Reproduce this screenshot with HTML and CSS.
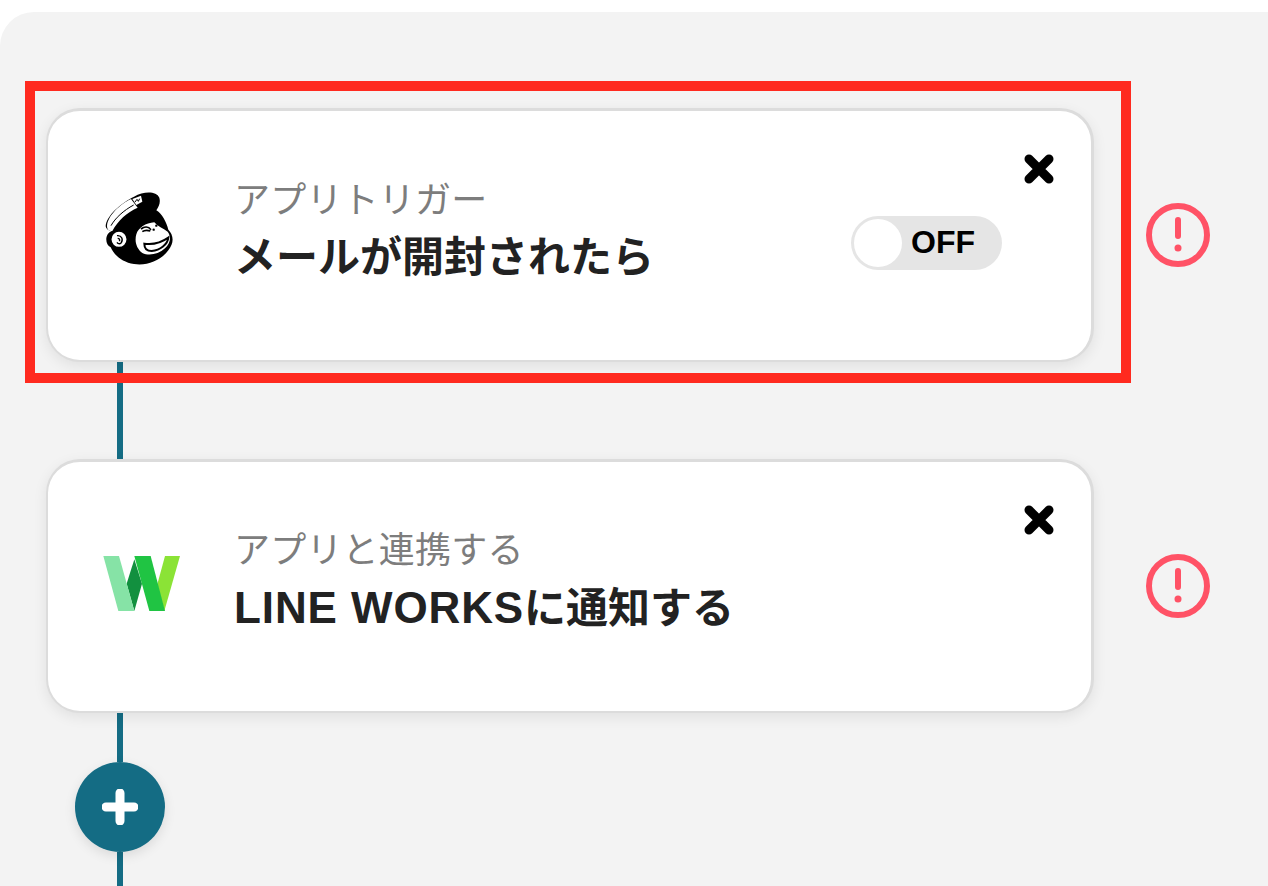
FILE: index.html
```html
<!DOCTYPE html>
<html lang="ja">
<head>
    <meta charset="UTF-8">
    <meta name="viewport" content="width=device-width, initial-scale=1.0">
    <title>フローボット</title>
    <link rel="stylesheet" href="styles.css">
</head>
<body>
    <div class="panel">
        <div class="highlight"></div>

        <div class="row">
            <div class="card">
                <svg class="logo" viewBox="0 15 360 330">
                    <path d="M80 172C82 140 125 103 165 83C195 66 232 66 241 86C245 100 240 112 232 124C250 135 262 160 268 182C284 198 286 222 268 244C248 272 205 292 165 285C130 280 105 258 95 235C78 228 76 195 98 186C88 185 81 180 80 172Z" fill="#000"/>
                    <path d="M84 170C87 140 122 106 156 90L176 116C146 128 116 155 100 186C88 186 84 180 84 170Z" fill="#fff"/>
                    <path d="M96 170C108 148 134 124 164 108" fill="none" stroke="#000" stroke-width="3"/>
                    <path d="M160 90L186 80L190 98L172 108Z" fill="#fff"/>
                    <path d="M168 99L174 91L178 97L182 89" fill="none" stroke="#000" stroke-width="3"/>
                    <circle cx="120" cy="211" r="25" fill="#fff" stroke="#000" stroke-width="5"/>
                    <path d="M114 200C128 198 134 212 126 222C122 226 116 224 114 220M116 208C122 208 124 214 120 216" fill="none" stroke="#000" stroke-width="4"/>
                    <path d="M172 196C178 176 200 162 226 160C236 172 252 178 266 188C278 204 274 222 258 238C238 256 210 262 190 252C172 238 166 216 172 196Z" fill="#fff"/>
                    <path d="M186 180C196 172 208 172 216 182M190 188C198 182 208 184 214 186" fill="none" stroke="#000" stroke-width="5"/>
                    <circle cx="232" cy="170" r="3.5" fill="#000"/>
                    <circle cx="224" cy="182" r="3.5" fill="#000"/>
                    <path d="M196 224C222 228 248 220 268 206C266 226 244 244 218 246C204 246 196 238 196 224Z" fill="#fff" stroke="#000" stroke-width="6"/>
                </svg>
                <div class="text">
                    <div class="label">アプリトリガー</div>
                    <div class="title">メールが開封されたら</div>
                </div>
                <div class="toggle">
                    <span class="knob"></span>
                    <span class="toggle-text">OFF</span>
                </div>
                <svg class="close" viewBox="0 0 30 30"><path d="M5 5L25 25M25 5L5 25" stroke="#000" stroke-width="9" stroke-linecap="round"/></svg>
            </div>
            <svg class="alert" viewBox="0 0 64 64">
                <circle cx="32" cy="32" r="29" fill="none" stroke="#ff5266" stroke-width="6"/>
                <path d="M32 17V33" stroke="#ff5266" stroke-width="6" stroke-linecap="round"/>
                <circle cx="32" cy="45" r="3.5" fill="#ff5266"/>
            </svg>
        </div>

        <div class="line"></div>

        <div class="row">
            <div class="card">
                <svg class="logo" viewBox="-3 -18 360 330">
                    <path d="M163 85L140 158L163 240L186 158Z" fill="#12903f"/>
                    <path d="M70 75H117L163 240H115Z" fill="#86e3a6"/>
                    <path d="M255 75H300L253 240L232 160Z" fill="#8be336"/>
                    <path d="M163 75H212L255 240H208Z" fill="#20c443"/>
                </svg>
                <div class="text">
                    <div class="label">アプリと連携する</div>
                    <div class="title"><span class="latin">LINE WORKS</span>に通知する</div>
                </div>
                <svg class="close" viewBox="0 0 30 30"><path d="M5 5L25 25M25 5L5 25" stroke="#000" stroke-width="9" stroke-linecap="round"/></svg>
            </div>
            <svg class="alert" viewBox="0 0 64 64">
                <circle cx="32" cy="32" r="29" fill="none" stroke="#ff5266" stroke-width="6"/>
                <path d="M32 17V33" stroke="#ff5266" stroke-width="6" stroke-linecap="round"/>
                <circle cx="32" cy="45" r="3.5" fill="#ff5266"/>
            </svg>
        </div>

        <div class="line line-short"></div>
        <button class="add">
            <svg viewBox="0 0 36 36"><path d="M18 4V32M4 18H32" stroke="#fff" stroke-width="9" stroke-linecap="round"/></svg>
        </button>
        <div class="line line-end"></div>
    </div>
</body>
</html>
```

FILE: styles.css
```css
body {
    margin: 0;
    background-color: #fff;
    font-family: "Liberation Sans", "Noto Sans CJK JP", sans-serif;
    height: 886px;
    overflow: hidden;
    padding-top: 12px;
    box-sizing: border-box;
}

.panel {
    position: relative;
    background-color: #f3f3f3;
    border-top-left-radius: 34px;
    height: 874px;
    padding: 96px 0 0 46px;
    box-sizing: border-box;
}

.highlight {
    position: absolute;
    top: 69px;
    left: 25px;
    width: 1106px;
    height: 302px;
    border: 10px solid #ff2a1f;
    box-sizing: border-box;
    z-index: 2;
}

.row {
    display: flex;
    align-items: center;
    gap: 52px;
}

.card {
    position: relative;
    display: flex;
    align-items: center;
    width: 1048px;
    height: 254px;
    padding-bottom: 14px;
    box-sizing: border-box;
    background-color: #fff;
    border-style: solid;
    border-color: #dcdcdc;
    border-width: 3px 3px 2px 2px;
    border-radius: 34px;
    box-shadow: 0 4px 14px rgba(0, 0, 0, 0.08);
}

.logo {
    width: 120px;
    height: 110px;
    margin-left: 31px;
    flex-shrink: 0;
}

.text {
    margin-left: 35px;
    margin-top: 8px;
}

.label {
    font-size: 36px;
    letter-spacing: 0.2px;
    line-height: 50px;
    color: #7d7d7d;
}

.title {
    font-size: 42px;
    font-weight: bold;
    line-height: 64px;
    color: #222;
}

.latin {
    font-size: 44px;
    letter-spacing: 0.9px;
}

.toggle {
    display: flex;
    align-items: center;
    width: 151px;
    height: 54px;
    margin-left: auto;
    margin-right: 89px;
    margin-top: 28px;
    padding: 3px;
    box-sizing: border-box;
    background-color: #e5e5e5;
    border-radius: 27px;
}

.knob {
    width: 48px;
    height: 48px;
    border-radius: 50%;
    background-color: #fff;
}

.toggle-text {
    margin-left: 9px;
    font-size: 32px;
    font-weight: bold;
    color: #000;
}

.close {
    position: absolute;
    top: 43px;
    right: 37px;
    width: 30px;
    height: 30px;
}

.alert {
    width: 64px;
    height: 64px;
    flex-shrink: 0;
}

.line {
    width: 6px;
    height: 97px;
    margin-left: 71px;
    background-color: #146c84;
}

.line-short {
    height: 49px;
}

.line-end {
    height: 40px;
}

.add {
    display: flex;
    align-items: center;
    justify-content: center;
    position: relative;
    width: 90px;
    height: 90px;
    margin-left: 29px;
    padding: 0;
    border: none;
    border-radius: 50%;
    background-color: #146c84;
    box-shadow: 0 4px 12px rgba(0, 0, 0, 0.1);
}

.add svg {
    width: 36px;
    height: 36px;
}
```
